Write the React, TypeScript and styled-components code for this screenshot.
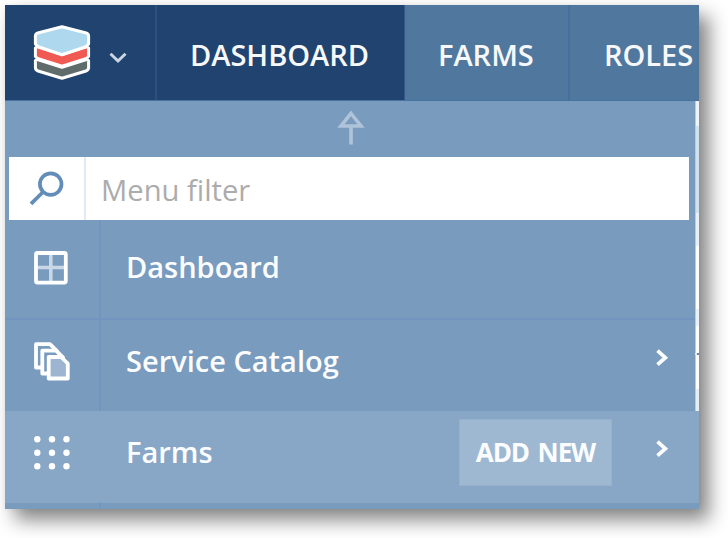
import React from "react";
import styled, { createGlobalStyle } from "styled-components";

const GlobalStyle = createGlobalStyle`
  * { box-sizing: border-box; }
  body { margin: 0; background: #fff; font-family: "Open Sans", "Noto Sans", sans-serif; overflow: hidden; }
`;

const Page = styled.main`
  width: 728px;
  height: 538px;
  padding: 5px;
  overflow: hidden;
`;

const Window = styled.div`
  display: flex;
  flex-direction: column;
  width: 694px;
  height: 504px;
  background: #799bbe;
  box-shadow: 10px 11px 18px rgba(0, 0, 0, 0.48), 0 0 6px rgba(0, 0, 0, 0.06);
`;

const TopBar = styled.header`
  display: flex;
  flex: none;
  height: 96px;
  overflow: hidden;
  border-bottom: 1px solid #47719f;
`;

const LogoCell = styled.div`
  display: flex;
  flex: none;
  width: 152px;
  padding: 20px 0 0 28px;
  gap: 17.5px;
  background: #21436f;
  border-right: 2px solid #2d5080;
`;

const Tab = styled.div<{ $width: number; $active?: boolean }>`
  flex: none;
  width: ${(p) => p.$width}px;
  padding-left: 33px;
  background: ${(p) => (p.$active ? "#21436f" : "#50779e")};
  border-right: ${(p) => (p.$active ? "1px solid #34588a" : "2px solid #476f9e")};
  color: #f6f8fb;
  font-size: 29px;
  font-weight: 600;
  line-height: 100px;
  white-space: nowrap;
  &:last-child { border-right: 0; padding-left: 34px; }
`;

const Body = styled.div`
  display: grid;
  grid-template-columns: 690px 4px;
  grid-template-rows: 310px 92px 6px;
`;

const Menu = styled.nav`
  display: flex;
  flex-direction: column;
  background: #799bbe;
`;

const PinRow = styled.div`
  display: flex;
  height: 56px;
  padding: 10px 0 0 332px;
`;

const Filter = styled.label`
  display: flex;
  height: 62.5px;
  margin: 0 6.5px 0 4px;
  background: #fff;
`;

const FilterIcon = styled.span`
  width: 77px;
  padding: 13px 0 0 19px;
  border-right: 2px solid #deebf7;
`;

const FilterInput = styled.input`
  flex: 1;
  min-width: 0;
  padding: 4px 0 0 15px;
  border: 0;
  outline: 0;
  background: transparent;
  font: 400 29.2px "Open Sans", "Noto Sans", sans-serif;
  &::placeholder { color: #acacac; opacity: 1; }
`;

const Row = styled.div<{ $height: number; $line?: boolean; $hover?: boolean }>`
  display: flex;
  height: ${(p) => p.$height}px;
  color: #fbfcfe;
  border-bottom: ${(p) => (p.$line ? "2px solid #7195bf" : "0")};
  background: ${(p) => (p.$hover ? "#88a6c6" : "transparent")};
  grid-column: ${(p) => (p.$hover ? "1 / 3" : "auto")};
`;

const RowIcon = styled.span<{ $top: number; $plain?: boolean }>`
  flex: none;
  width: 96px;
  padding: ${(p) => p.$top}px 0 0 29px;
  border-right: 2px solid ${(p) => (p.$plain ? "transparent" : "#7195bf")};
`;

const RowLabel = styled.span<{ $top: number }>`
  flex: 1;
  padding: ${(p) => p.$top}px 0 0 25px;
  font-size: 29px;
  font-weight: 600;
  line-height: 40px;
  white-space: nowrap;
`;

const AddButton = styled.button`
  width: 153px;
  height: 67px;
  margin-top: 8px;
  padding: 0 0 2px;
  border: 1px solid #96b0cd;
  background: #9fb8d2;
  color: #fbfcfe;
  font: 700 26px "Open Sans", "Noto Sans", sans-serif;
  letter-spacing: -1.1px;
  word-spacing: 3px;
  white-space: nowrap;
`;

const Arrow = styled.span<{ $top: number; $right: number }>`
  flex: none;
  padding: ${(p) => p.$top}px ${(p) => p.$right}px 0 44px;
`;

const PageEdge = styled.div`
  display: flex;
  flex-direction: column;
`;

const EdgeBand = styled.span<{ $height: number; $color: string }>`
  height: ${(p) => p.$height}px;
  background: ${(p) => p.$color};
  border-left: 1px solid #b9cde1;
`;

const EdgeMark = styled.span`
  height: 2px;
  background: #71849c;
  border-left: 2px solid #e4edf6;
`;

const Footer = styled.div`
  display: flex;
  grid-column: 1 / 3;
`;

const Svg = styled.svg`
  display: block;
  overflow: visible;
`;

const Logo = () => (
  <Svg width="58" height="56" viewBox="0 0 58 56" stroke="#fff" strokeWidth="3" strokeLinejoin="round">
    <path d="M2.4 35.5V42.5Q2.4 45 5 46L29 53.3L53 46Q55.6 45 55.6 42.5V35.5L53.5 34.5L29 42.3L4.5 34.5Z" fill="#5f6c6b" />
    <path d="M2.4 23V31.5L4.5 33.5L29 41.3L53.5 33.5L55.6 31.5V23L53.5 21.8L29 29.7L4.5 21.8Z" fill="#f15a52" />
    <path d="M2.4 11Q2.4 8.8 4.8 8L29 1.8L53.2 8Q55.6 8.8 55.6 11V19L53.5 21.3L29 29.7L4.5 21.3L2.4 19Z" fill="#aed8ee" />
  </Svg>
);

const ChevronDown = () => (
  <Svg width="18" height="38" viewBox="0 0 18 38">
    <path d="M1.5 28.7L9 36L16.5 28.7" fill="none" stroke="#cbd5e3" strokeWidth="3" />
  </Svg>
);

const ChevronRight = () => (
  <Svg width="12" height="18" viewBox="0 0 12 18">
    <path d="M1.5 1.7L9.3 8.7L1.5 15.7" fill="none" stroke="#fbfcfe" strokeWidth="3.8" />
  </Svg>
);

const PinArrow = () => (
  <Svg width="28" height="34" viewBox="0 0 28 34">
    <path d="M14 2.5L24 15H4Z M14 15V33.5" fill="none" stroke="#afc3d9" strokeWidth="3.6" />
  </Svg>
);

const SearchIcon = () => (
  <Svg width="38" height="38" viewBox="0 0 38 38">
    <circle cx="22.7" cy="14.1" r="10.8" fill="none" stroke="#628db9" strokeWidth="3.7" />
    <path d="M15 22L3 33.8" stroke="#628db9" strokeWidth="3.8" />
  </Svg>
);

const DashboardIcon = () => (
  <Svg width="34" height="34" viewBox="0 0 34 34" fill="none">
    <path d="M16.8 3V31M3 16.5H31" stroke="#c9d7e6" strokeWidth="3.6" />
    <rect x="2" y="2" width="29.8" height="29.6" rx="1.5" stroke="#fff" strokeWidth="3.8" />
  </Svg>
);

const CatalogIcon = () => (
  <Svg width="37" height="39" viewBox="0 0 37 39" stroke="#fff" strokeWidth="3.8" strokeLinejoin="round">
    <path d="M2 1.2H16L23 8.2V24.5H2Z" fill="#799bbe" />
    <path d="M8.3 7.6H22L29 14.3V30.5H8.3Z" fill="#799bbe" />
    <path d="M14.7 14H27L33.8 20.5V35.5H14.7Z" fill="#9db5d1" />
  </Svg>
);

const FarmsIcon = () => (
  <Svg width="36" height="34" viewBox="0 0 36 34" fill="#fff">
    {[3.3, 16.7, 30.3].map((y) =>
      [3.3, 18, 32.5].map((x) => <circle key={`${x}-${y}`} cx={x} cy={y} r="3.2" />),
    )}
  </Svg>
);

const edgeBands: [number, string][] = [
  [25, "#eff4fa"],
  [87, "#d1e2ef"],
  [33, "#e9eff8"],
  [63, "#ffffff"],
  [17, "#e9f0f8"],
  [27, "#ffffff"],
];

export default function App() {
  return (
    <>
      <GlobalStyle />
      <Page>
        <Window>
          <TopBar>
            <LogoCell>
              <Logo />
              <ChevronDown />
            </LogoCell>
            <Tab $width={248} $active>DASHBOARD</Tab>
            <Tab $width={165}>FARMS</Tab>
            <Tab $width={129}>ROLES</Tab>
          </TopBar>
          <Body>
            <Menu>
              <PinRow><PinArrow /></PinRow>
              <Filter>
                <FilterIcon><SearchIcon /></FilterIcon>
                <FilterInput placeholder="Menu filter" />
              </Filter>
              <Row $height={100} $line>
                <RowIcon $top={31}><DashboardIcon /></RowIcon>
                <RowLabel $top={27}>Dashboard</RowLabel>
              </Row>
              <Row $height={91.5}>
                <RowIcon $top={23}><CatalogIcon /></RowIcon>
                <RowLabel $top={21}>Service Catalog</RowLabel>
                <Arrow $top={29} $right={27}><ChevronRight /></Arrow>
              </Row>
            </Menu>
            <PageEdge>
              {edgeBands.map(([height, color], i) => (
                <EdgeBand key={i} $height={height} $color={color} />
              ))}
              <EdgeMark />
              <EdgeBand $height={34} $color="#ffffff" />
              <EdgeBand $height={22} $color="#e6eef5" />
            </PageEdge>
            <Row $height={92} $hover>
              <RowIcon $top={25} $plain><FarmsIcon /></RowIcon>
              <RowLabel $top={21}>Farms</RowLabel>
              <AddButton>ADD NEW</AddButton>
              <Arrow $top={29} $right={31}><ChevronRight /></Arrow>
            </Row>
            <Footer><RowIcon $top={0} /></Footer>
          </Body>
        </Window>
      </Page>
    </>
  );
}
